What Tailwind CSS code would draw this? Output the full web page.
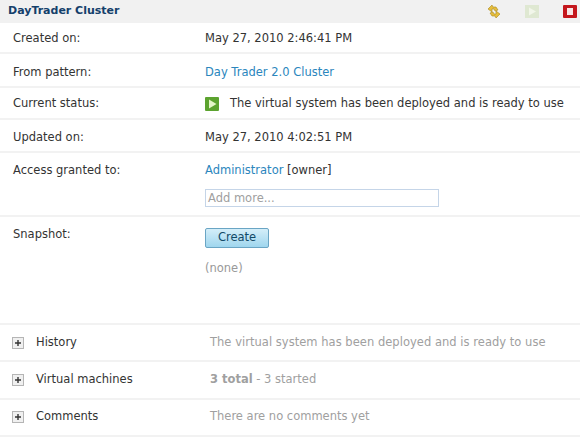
<!DOCTYPE html>
<html><head><script src="https://cdn.jsdelivr.net/npm/@tailwindcss/browser@4"></script></head>
<body class="bg-white">
<div class="w-[580px] h-[446px] overflow-hidden bg-white font-['DejaVu_Sans',sans-serif] text-[11.5px] text-[#333]">
<div class="h-[23px] bg-[#f1f1f1] flex items-center pl-2 pr-[3px]">
<span class="font-bold text-[11px] text-[#14406b] flex-1">DayTrader Cluster</span>
<svg width="14" height="15" viewBox="0 0 14 15" class="mr-[24px]"><path d="M1 5L5 1l1 2h3l2 3-3 1-1-2H5v3z" fill="#e6bd3c" stroke="#a98a20" stroke-width=".6"/><path d="M13 10l-4 4-1-2H5L3 9l3-1 1 2h2V7z" fill="#e6bd3c" stroke="#a98a20" stroke-width=".6"/></svg>
<svg width="14" height="13" viewBox="0 0 14 13" class="mr-[24px]"><rect width="14" height="13" fill="#dfe8d2"/><path d="M4 2.5l7 4-7 4z" fill="#f2f6ea"/></svg>
<svg width="14" height="13" viewBox="0 0 14 13"><rect width="14" height="13" rx="1" fill="#c4161c"/><rect x="4" y="3" width="6" height="7" fill="#f8e4e4"/></svg>
</div>
<div class="flex h-[31px] pt-[3px] items-center border-b-2 border-[#f2f2f2] pl-[13px]"><span class="w-[192px]">Created on:</span><span>May 27, 2010 2:46:41 PM</span></div>
<div class="flex h-[34px] pt-[5px] items-center border-b-2 border-[#f2f2f2] pl-[13px]"><span class="w-[192px]">From pattern:</span><span class="text-[#2b86bd]">Day Trader 2.0 Cluster</span></div>
<div class="flex h-[32px] pt-[2px] items-center border-b-2 border-[#f2f2f2] pl-[13px]"><span class="w-[192px]">Current status:</span><svg width="14" height="14" viewBox="0 0 14 14" class="mr-[11px]"><rect width="14" height="14" rx="1" fill="#5ca32f"/><path d="M4 2.5l7.5 4.5L4 11.5z" fill="#e4f6c8"/></svg><span>The virtual system has been deployed and is ready to use</span></div>
<div class="flex h-[33px] pt-[4px] items-center border-b-2 border-[#f2f2f2] pl-[13px]"><span class="w-[192px]">Updated on:</span><span>May 27, 2010 4:02:51 PM</span></div>
<div class="h-[64px] border-b-2 border-[#f2f2f2] pl-[13px] pt-[9px]"><div class="flex"><span class="w-[192px]">Access granted to:</span><span><span class="text-[#2b86bd]">Administrator</span> [owner]</span></div><div class="ml-[192px] mt-[10px] w-[234px] h-[18px] border border-[#c5d5e8] px-[2px] leading-[17px] text-[#a0a0a0]">Add more...</div></div>
<div class="h-[108px] border-b-2 border-[#f2f2f2] pl-[13px] pt-[9px] flex"><span class="w-[192px]">Snapshot:</span><div class="pt-[2px]"><div class="w-[64px] h-[20px] rounded-[2px] border border-[#6aa5c4] bg-linear-to-b from-[#d4eef9] to-[#9fd6ee] text-[#124a68] flex items-center justify-center">Create</div><div class="mt-[12px] text-[#999]">(none)</div></div></div>
<div class="flex h-[37px] items-center border-b-2 border-[#f2f2f2] pl-[12px]"><svg width="12" height="12" viewBox="0 0 12 12" class="mr-[12px]"><rect x=".5" y=".5" width="11" height="11" fill="#f0f0f0" stroke="#b5b5b5"/><path d="M3 6h6M6 3v6" stroke="#333" stroke-width="1.4"/></svg><span class="w-[174px]">History</span><span class="text-[#a0a0a0] tracking-[0.03px]">The virtual system has been deployed and is ready to use</span></div>
<div class="flex h-[38px] items-center border-b-2 border-[#f2f2f2] pl-[12px]"><svg width="12" height="12" viewBox="0 0 12 12" class="mr-[12px]"><rect x=".5" y=".5" width="11" height="11" fill="#f0f0f0" stroke="#b5b5b5"/><path d="M3 6h6M6 3v6" stroke="#333" stroke-width="1.4"/></svg><span class="w-[174px]">Virtual machines</span><span class="text-[#a0a0a0]"><b>3 total</b> - 3 started</span></div>
<div class="flex h-[37px] pb-[1px] items-center border-b-2 border-[#f2f2f2] pl-[12px]"><svg width="12" height="12" viewBox="0 0 12 12" class="mr-[12px]"><rect x=".5" y=".5" width="11" height="11" fill="#f0f0f0" stroke="#b5b5b5"/><path d="M3 6h6M6 3v6" stroke="#333" stroke-width="1.4"/></svg><span class="w-[174px]">Comments</span><span class="text-[#a0a0a0]">There are no comments yet</span></div>
</div>
</body></html>
